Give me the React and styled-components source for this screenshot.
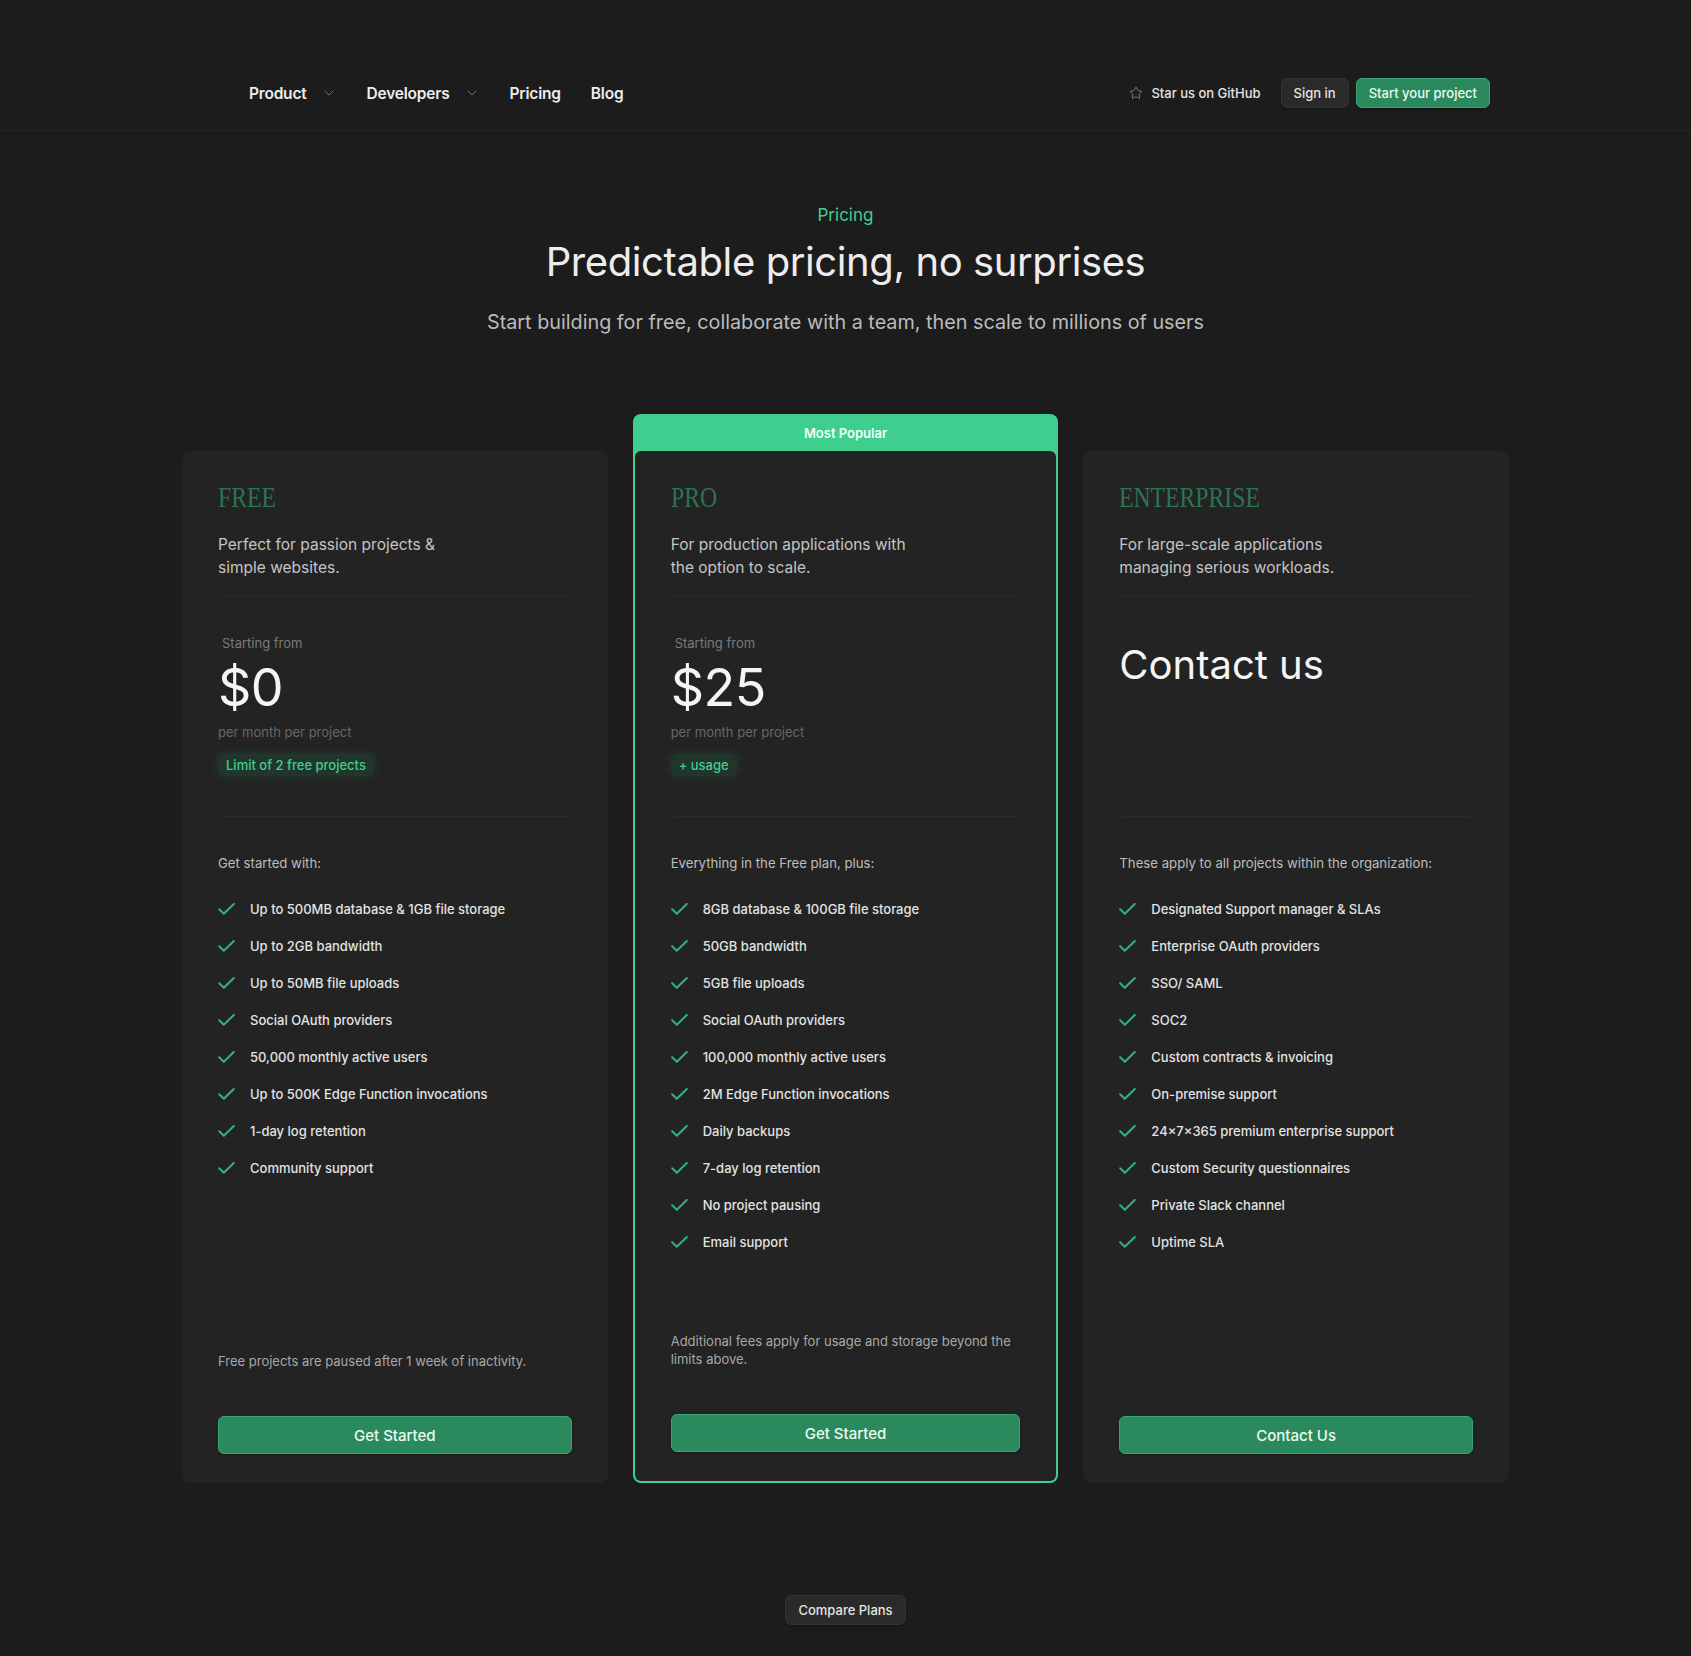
import React from "react"
import styled, { createGlobalStyle } from "styled-components"
import { ChevronDown, Star } from "lucide-react"

const GlobalStyle = createGlobalStyle`
  * { box-sizing: border-box; }
  body {
    margin: 0;
    background: #1c1c1c;
    color: #ededed;
    font-family: Inter, "Noto Sans", "Liberation Sans", sans-serif;
    -webkit-font-smoothing: antialiased;
  }
`

const plans = [
  {
    name: "FREE",
    desc: "Perfect for passion projects & simple websites.",
    price: "$0",
    badge: "Limit of 2 free projects",
    intro: "Get started with:",
    features: [
      "Up to 500MB database & 1GB file storage",
      "Up to 2GB bandwidth",
      "Up to 50MB file uploads",
      "Social OAuth providers",
      "50,000 monthly active users",
      "Up to 500K Edge Function invocations",
      "1-day log retention",
      "Community support",
    ],
    note: "Free projects are paused after 1 week of inactivity.",
    cta: "Get Started",
  },
  {
    name: "PRO",
    popular: true,
    desc: "For production applications with the option to scale.",
    price: "$25",
    badge: "+ usage",
    intro: "Everything in the Free plan, plus:",
    features: [
      "8GB database & 100GB file storage",
      "50GB bandwidth",
      "5GB file uploads",
      "Social OAuth providers",
      "100,000 monthly active users",
      "2M Edge Function invocations",
      "Daily backups",
      "7-day log retention",
      "No project pausing",
      "Email support",
    ],
    note: "Additional fees apply for usage and storage beyond the limits above.",
    cta: "Get Started",
  },
  {
    name: "ENTERPRISE",
    desc: "For large-scale applications managing serious workloads.",
    contact: true,
    intro: "These apply to all projects within the organization:",
    features: [
      "Designated Support manager & SLAs",
      "Enterprise OAuth providers",
      "SSO/ SAML",
      "SOC2",
      "Custom contracts & invoicing",
      "On-premise support",
      "24×7×365 premium enterprise support",
      "Custom Security questionnaires",
      "Private Slack channel",
      "Uptime SLA",
    ],
    note: "",
    cta: "Contact Us",
  },
]

const Nav = styled.header`
  height: 131px;
  border-bottom: 1px solid #262626;
  padding: 78px 201px 0 249px;
  display: flex;
  align-items: flex-start;
  justify-content: space-between;
`

const NavLinks = styled.nav`
  display: flex;
  align-items: center;
  gap: 30px;
  height: 30px;
`

const NavLink = styled.a`
  display: flex;
  align-items: center;
  font-size: 15.5px;
  font-weight: 600;
  color: #ededed;
  letter-spacing: -0.2px;
  cursor: pointer;

  svg {
    margin-left: 14px;
    color: #6f6f6f;
  }
`

const NavActions = styled.div`
  display: flex;
  align-items: center;
  height: 30px;
`

const GitHubLink = styled.a`
  display: flex;
  align-items: center;
  gap: 8px;
  font-size: 13px;
  font-weight: 500;
  color: #e4e4e4;
  margin-right: 20px;

  svg {
    color: #8a8a8a;
  }
`

const Button = styled.button`
  font-family: inherit;
  font-size: ${p => (p.$large ? "15px" : "13px")};
  font-weight: 500;
  height: ${p => (p.$large ? "38px" : "30px")};
  padding: 0 12px;
  border-radius: 6px;
  cursor: pointer;
  color: ${p => (p.$primary ? "#eafaf1" : "#e4e4e4")};
  background: ${p => (p.$primary ? "#2b8a5d" : "#2a2a2a")};
  border: 1px solid ${p => (p.$primary ? "#3aa574" : "#333")};
  box-shadow: 0 1px 2px rgba(0, 0, 0, 0.3);
  width: ${p => (p.$block ? "100%" : "auto")};
`

const Hero = styled.section`
  padding-top: 72px;
  text-align: center;
`

const Eyebrow = styled.div`
  font-size: 17px;
  line-height: 24px;
  color: #3ecf8e;
`

const Title = styled.h1`
  margin: 11px 0 0;
  font-size: 40px;
  line-height: 48px;
  font-weight: 400;
  color: #ededed;
  letter-spacing: -0.4px;
`

const Subtitle = styled.p`
  margin: 22px 0 0;
  font-size: 19.8px;
  line-height: 28px;
  color: #bbbbbb;
`

const Cards = styled.div`
  width: 1327px;
  margin: 78px auto 0;
  display: grid;
  grid-template-columns: repeat(3, 1fr);
  gap: 25px;
`

const Column = styled.div`
  display: flex;
  flex-direction: column;
  padding-top: ${p => (p.$popular ? "0" : "37px")};
  background: ${p => (p.$popular ? "#3ecf8e" : "transparent")};
  border-radius: 8px;
  padding-left: ${p => (p.$popular ? "2px" : "0")};
  padding-right: ${p => (p.$popular ? "2px" : "0")};
  padding-bottom: ${p => (p.$popular ? "2px" : "0")};
`

const Banner = styled.div`
  height: 37px;
  display: flex;
  align-items: center;
  justify-content: center;
  font-size: 13px;
  font-weight: 600;
  color: #f4fff9;
`

const Card = styled.div`
  flex: 1;
  display: flex;
  flex-direction: column;
  background: #232323;
  border-radius: ${p => (p.$popular ? "6px" : "8px")};
  padding: 28px 36px 29px;
`

const PlanName = styled.h2`
  margin: 0;
  font-family: "Liberation Serif", serif;
  font-weight: 400;
  font-size: 30px;
  line-height: 36px;
  color: #2c7352;
  display: inline-block;
  transform: scaleX(0.79);
  transform-origin: left center;
`

const Description = styled.p`
  margin: 18px 0 0;
  max-width: 250px;
  font-size: 15.5px;
  line-height: 23px;
  color: #c4c4c4;
`

const Divider = styled.hr`
  border: 0;
  height: 1px;
  background: #2d2d2d;
  margin: ${p => p.$top || "16px"} 4px 0;
`

const PriceBlock = styled.div`
  height: 220px;
  padding-top: 38px;
`

const StartingFrom = styled.div`
  padding-left: 4px;
  font-size: 13px;
  line-height: 18px;
  color: #7a7a7a;
`

const Price = styled.div`
  margin-top: 10px;
  font-size: 52px;
  line-height: 52px;
  color: #f5f5f5;
  letter-spacing: -0.5px;
`

const PerMonth = styled.div`
  margin-top: 9px;
  font-size: 13px;
  line-height: 18px;
  color: #676767;
`

const Badge = styled.span`
  display: inline-block;
  margin-top: 13px;
  padding: 2px 8px;
  border-radius: 6px;
  font-size: 13px;
  font-weight: 500;
  line-height: 18px;
  color: #3ecf8e;
  background: rgba(34, 120, 78, 0.22);
  box-shadow: 0 0 10px rgba(30, 140, 90, 0.25);
`

const ContactPrice = styled.div`
  margin-top: 7px;
  font-size: 40px;
  line-height: 48px;
  color: #f5f5f5;
`

const Intro = styled.p`
  margin: 36px 0 0;
  font-size: 13.2px;
  line-height: 20px;
  color: #bdbdbd;
`

const FeatureList = styled.ul`
  list-style: none;
  margin: 17px 0 0;
  padding: 0;
`

const Feature = styled.li`
  display: flex;
  align-items: center;
  height: 37px;
  gap: 15px;
  font-size: 13px;
  font-weight: 500;
  color: #e2e2e2;

  svg {
    flex: none;
  }
`

const Footer = styled.div`
  margin-top: auto;
  padding-top: 72px;
`

const Note = styled.div`
  min-height: 36px;
  display: flex;
  align-items: flex-end;
  font-size: 13px;
  line-height: 18px;
  color: #a8a8a8;
  margin-bottom: 46px;
`

const Bottom = styled.div`
  display: flex;
  justify-content: center;
  padding: 112px 0 32px;
`

const CheckIcon = () => (
  <svg width="17" height="12" viewBox="0 0 17 12" fill="none">
    <path d="M1.2 6.2l4.6 4.6L15.8 1" stroke="#34b27b" strokeWidth="2" strokeLinecap="round" strokeLinejoin="round" />
  </svg>
)

const PlanCard = ({ plan }) => (
  <Column $popular={plan.popular}>
    {plan.popular && <Banner>Most Popular</Banner>}
    <Card $popular={plan.popular}>
      <div>
        <PlanName>{plan.name}</PlanName>
      </div>
      <Description>{plan.desc}</Description>
      <Divider />
      <PriceBlock>
        {plan.contact ? (
          <ContactPrice>Contact us</ContactPrice>
        ) : (
          <>
            <StartingFrom>Starting from</StartingFrom>
            <Price>{plan.price}</Price>
            <PerMonth>per month per project</PerMonth>
            <Badge>{plan.badge}</Badge>
          </>
        )}
      </PriceBlock>
      <Divider $top="0" />
      <Intro>{plan.intro}</Intro>
      <FeatureList>
        {plan.features.map(f => (
          <Feature key={f}>
            <CheckIcon />
            {f}
          </Feature>
        ))}
      </FeatureList>
      <Footer>
        <Note>{plan.note}</Note>
        <Button $primary $large $block>
          {plan.cta}
        </Button>
      </Footer>
    </Card>
  </Column>
)

export default function App() {
  return (
    <>
      <GlobalStyle />
      <Nav>
        <NavLinks>
          <NavLink>
            Product <ChevronDown size={16} strokeWidth={1.5} />
          </NavLink>
          <NavLink>
            Developers <ChevronDown size={16} strokeWidth={1.5} />
          </NavLink>
          <NavLink>Pricing</NavLink>
          <NavLink>Blog</NavLink>
        </NavLinks>
        <NavActions>
          <GitHubLink>
            <Star size={14} strokeWidth={1.5} />
            Star us on GitHub
          </GitHubLink>
          <Button>Sign in</Button>
          <Button $primary style={{ marginLeft: 7 }}>
            Start your project
          </Button>
        </NavActions>
      </Nav>
      <Hero>
        <Eyebrow>Pricing</Eyebrow>
        <Title>Predictable pricing, no surprises</Title>
        <Subtitle>
          Start building for free, collaborate with a team, then scale to millions of users
        </Subtitle>
      </Hero>
      <Cards>
        {plans.map(p => (
          <PlanCard key={p.name} plan={p} />
        ))}
      </Cards>
      <Bottom>
        <Button>Compare Plans</Button>
      </Bottom>
    </>
  )
}
